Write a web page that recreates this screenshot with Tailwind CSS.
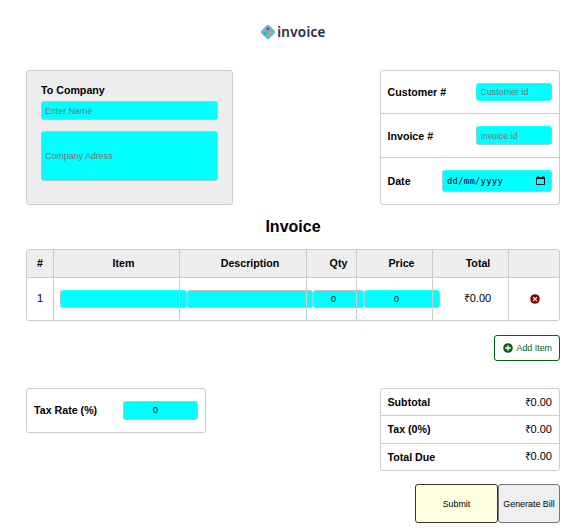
<!DOCTYPE html>
<html lang="en">
<head>
<meta charset="utf-8">
<title>Invoice</title>
<script src="https://cdn.jsdelivr.net/npm/@tailwindcss/browser@4"></script>
</head>
<body class="bg-white">
<main class="h-[532px] w-[585px] overflow-hidden pl-[26px] pr-[25px] font-['Liberation_Sans',Arial,sans-serif] text-[10.67px] leading-[14px] text-black">
  <header class="flex h-[70px] items-center justify-center pb-[6px]">
    <svg class="size-4 shrink-0" viewBox="0 0 16 16">
      <rect x="2.4" y="2.4" width="11.2" height="11.2" rx="1.8" fill="#5bbdd2" transform="rotate(45 8 8)"/>
      <circle cx="7.8" cy="4.7" r="1.5" fill="#d52d61"/><circle cx="5" cy="9.4" r="1.5" fill="#4fa18b"/><circle cx="10.6" cy="9.5" r="1.6" fill="#d79b55"/>
    </svg>
    <span class="ml-px font-['Open_Sans',sans-serif] text-[13.5px] font-semibold leading-4 tracking-[0.35px] text-[#252b3c] [-webkit-text-stroke:0.2px_#252b3c]">invoice</span>
  </header>

  <section class="flex justify-between">
    <div class="h-[135px] w-[207px] rounded-[3px] border border-[#ccc] bg-[#eee] pl-[14px] pr-[14px] pt-[12px]">
      <h2 class="font-bold">To Company</h2>
      <input placeholder="Enter Name" class="mt-[4px] block h-[19px] w-[177px] rounded-[3px] border border-dotted border-[#ccc] bg-[#0ff] px-[3px] text-[8.9px] placeholder:text-[#757575]">
      <input placeholder="Company Adress" class="mt-[11px] block h-[50px] w-[177px] rounded-[3px] border border-dotted border-[#ccc] bg-[#0ff] px-[3px] text-[8.9px] placeholder:text-[#757575]">
    </div>
    <div class="grid h-[135px] w-[180px] grid-rows-[43px_44px_46px] rounded-[3px] border border-[#ccc] font-bold">
      <label class="flex items-center justify-between border-b border-[#ccc] pl-[6.5px] pr-[7px]">Customer #
        <input placeholder="Customer id" class="h-[18px] w-[76px] rounded-[3px] border border-dotted border-[#ccc] bg-[#0ff] px-[3.5px] text-[8.9px] font-normal placeholder:text-[#757575]"></label>
      <label class="flex items-center justify-between border-b border-[#ccc] pl-[6.5px] pr-[7px]">Invoice #
        <input placeholder="invoice id" class="h-[19px] w-[76px] rounded-[3px] border border-dotted border-[#ccc] bg-[#0ff] px-[3.5px] text-[8.9px] font-normal placeholder:text-[#757575]"></label>
      <div class="flex items-center justify-between pl-[6.5px] pr-[7px]">Date
        <div class="flex h-[22px] w-[110px] items-center justify-between rounded-[3px] border border-dotted border-[#ccc] bg-[#0ff] pl-[4px] pr-[6px] font-['DejaVu_Sans_Mono',monospace] text-[8.9px] font-normal tracking-[0.26px]">dd/mm/yyyy
          <svg class="h-[10px] w-[9px]" viewBox="0 0 9 10"><path fill="#000" fill-rule="evenodd" d="M1 1h.5V0h1v1h4V0h1v1H8q1 0 1 1v6q0 1-1 1H1Q0 9 0 8V2Q0 1 1 1Zm0 2V8h7V3Z"/></svg>
        </div>
      </div>
    </div>
  </section>

  <h1 class="flex h-[44px] items-center justify-center text-[16px] font-bold leading-5">Invoice</h1>

  <section class="grid h-[72px] grid-cols-[26px_126px_127px_50px_76px_76px_51px] grid-rows-[27px_43px] rounded-[3px] border border-[#ccc] bg-[linear-gradient(#eee_27px,white_27px)]">
    <div class="flex items-center justify-center pb-px font-bold">#</div>
    <div class="flex items-center justify-center border-l border-[#ccc] pb-px pl-[14px] font-bold">Item</div>
    <div class="flex items-center justify-center border-l border-[#ccc] pb-px pl-[14px] font-bold">Description</div>
    <div class="flex items-center justify-center border-l border-[#ccc] pb-px pl-[14px] font-bold">Qty</div>
    <div class="flex items-center justify-center border-l border-[#ccc] pb-px pl-[14px] font-bold">Price</div>
    <div class="flex items-center justify-center border-l border-[#ccc] pb-px pl-[15px] font-bold">Total</div>
    <div class="border-l border-[#ccc]"></div>
    <div class="flex items-center justify-center border-t border-[#ccc] pb-[2px] text-[11px]">1</div>
    <div class="flex min-w-0 items-center border-l border-t border-[#ccc] pl-[6px]"><input class="h-[18px] w-[127px] shrink-0 rounded-[3px] border border-dotted border-[#ccc] bg-[#0ff]"></div>
    <div class="flex min-w-0 items-center border-l border-t border-[#ccc] pl-[7px]"><input class="h-[18px] w-[126px] shrink-0 rounded-[3px] border border-dotted border-[#ccc] bg-[#0ff]"></div>
    <div class="flex min-w-0 items-center border-l border-t border-[#ccc] pl-[6px]"><input value="0" class="h-[18px] w-[51px] shrink-0 rounded-[3px] border border-dotted border-[#ccc] bg-[#0ff] pr-[10px] text-center text-[8.9px]"></div>
    <div class="flex min-w-0 items-center border-l border-t border-[#ccc] pl-[7px]"><input value="0" class="h-[18px] w-[76px] shrink-0 rounded-[3px] border border-dotted border-[#ccc] bg-[#0ff] pr-[11px] text-center text-[8.9px]"></div>
    <div class="flex items-center justify-center border-l border-t border-[#ccc] pb-[2px] pl-[14px] text-[11px]">₹0.00</div>
    <div class="flex items-center justify-center border-l border-t border-[#ccc] pl-px">
      <svg class="size-[10px]" viewBox="0 0 10 10"><circle cx="5" cy="5" r="4.8" fill="#8b0000"/><path d="M3.1 3.1l3.8 3.8M6.9 3.1L3.1 6.9" stroke="#fff" stroke-width="1.3"/></svg>
    </div>
  </section>

  <div class="mt-[14px] flex justify-end">
    <button class="flex h-[26px] w-[66px] items-center rounded-[3px] border border-[#006414] pb-px pl-[8px] text-[8.9px] text-[#006414]">
      <svg class="mr-[3.5px] size-[10px] shrink-0" viewBox="0 0 10 10"><circle cx="5" cy="5" r="4.8" fill="#006414"/><path d="M5 2.2v5.6M2.2 5h5.6" stroke="#fff" stroke-width="1.3"/></svg><span class="whitespace-nowrap">Add Item</span>
    </button>
  </div>

  <section class="mt-[27px] flex items-start justify-between">
    <label class="flex h-[45px] w-[180px] items-center justify-between rounded-[3px] border border-[#ccc] pl-[7px] pr-[7px] font-bold"><span class="pb-px">Tax Rate (%)</span>
      <input value="0" class="h-[19px] w-[75px] rounded-[3px] border border-dotted border-[#ccc] bg-[#0ff] pb-[2px] pr-[10px] text-center text-[8.9px] font-normal"></label>
    <div class="grid h-[83px] w-[180px] grid-rows-[27px_28px_26px] rounded-[3px] border border-[#ccc]">
      <div class="flex items-center justify-between border-b border-[#ccc] pl-[6.5px] pr-[7px]"><b>Subtotal</b><span class="text-[11px]">₹0.00</span></div>
      <div class="flex items-center justify-between border-b border-[#ccc] pb-px pl-[6.5px] pr-[7px]"><b>Tax (0%)</b><span class="text-[11px]">₹0.00</span></div>
      <div class="flex items-center justify-between pl-[6.5px] pr-[7px]"><b>Total Due</b><span class="pb-[2px] text-[11px]">₹0.00</span></div>
    </div>
  </section>

  <div class="mt-[13px] flex justify-end text-[8.9px]">
    <button class="h-[39px] w-[83px] rounded-[3px] border border-[#333] bg-[#ffffe0]">Submit</button>
    <button class="h-[39px] w-[62px] whitespace-nowrap rounded-[3px] border border-[#767676] bg-[#efefef]">Generate Bill</button>
  </div>
</main>
</body>
</html>
